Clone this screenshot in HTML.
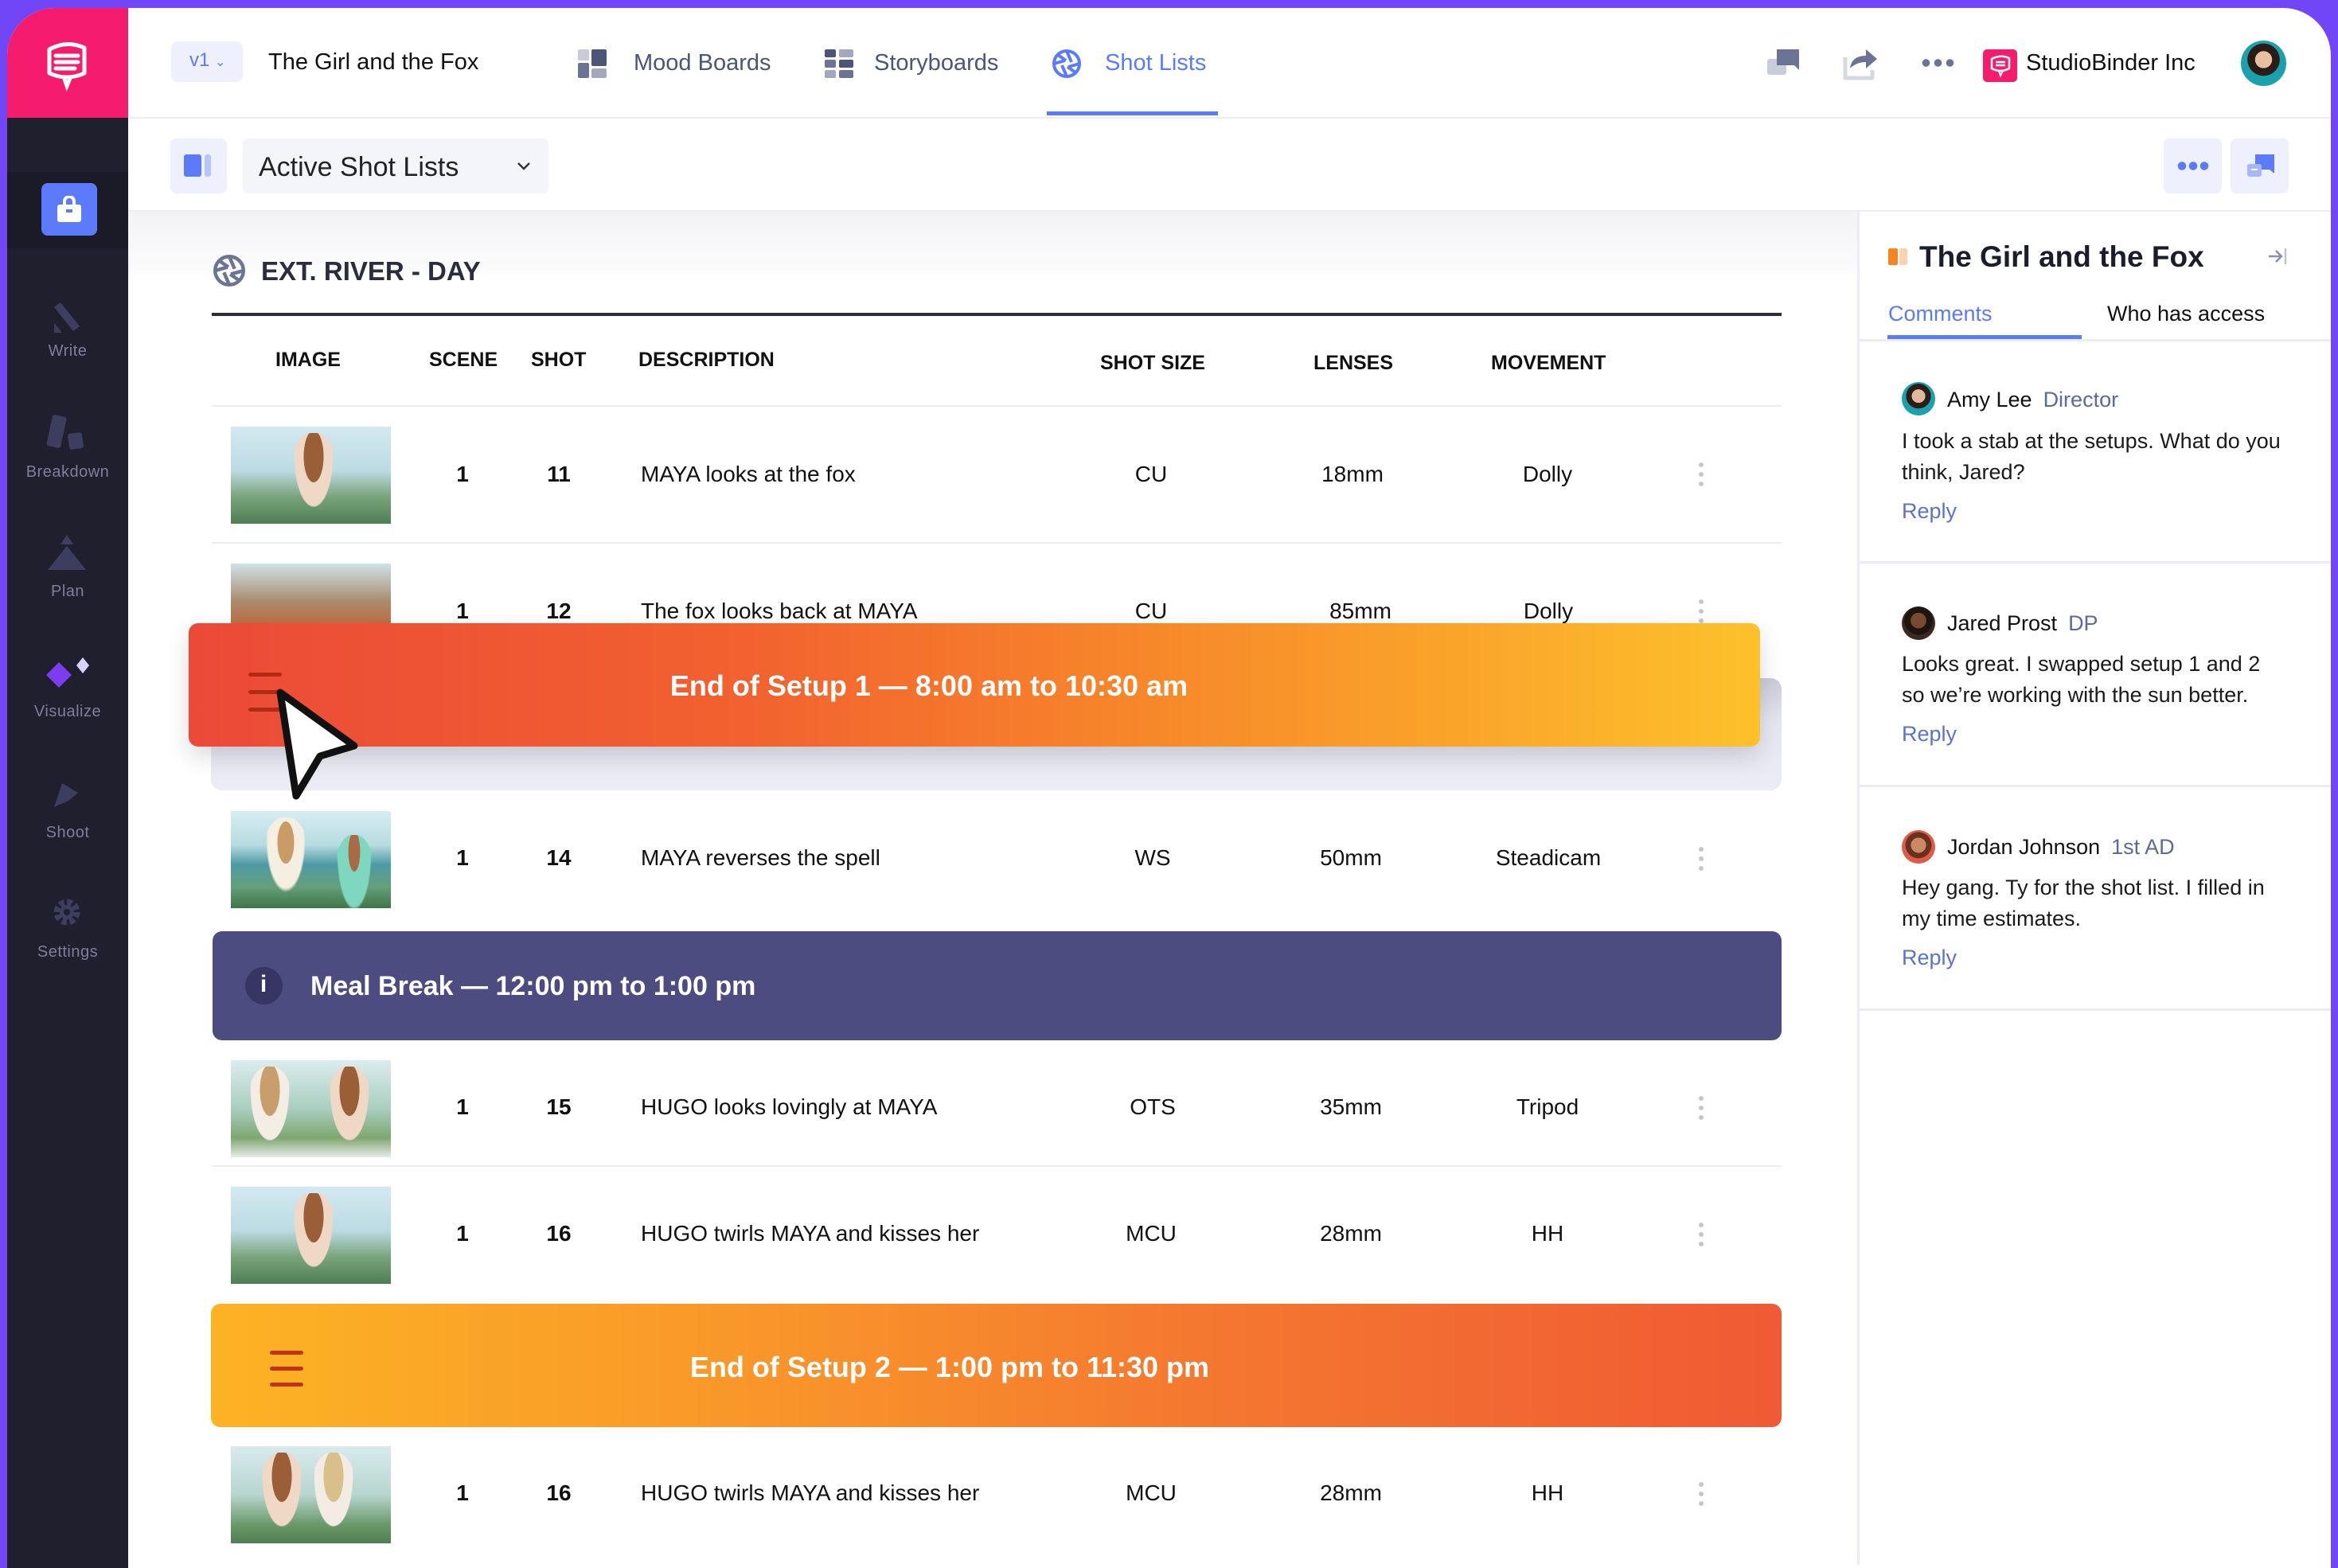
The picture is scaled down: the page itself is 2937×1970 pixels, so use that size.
<!DOCTYPE html>
<html><head><meta charset="utf-8"><style>
*{margin:0;padding:0;box-sizing:border-box}
body{width:2937px;height:1962px;overflow:hidden;background:#7046f6;font-family:"Liberation Sans",sans-serif;position:relative}
.a{position:absolute}
.t{position:absolute;white-space:nowrap;line-height:1}
.hd{font-size:25px;font-weight:bold;color:#111}
.rt{font-size:28px;color:#111}
.b{font-weight:bold}
.c{transform:translateX(-50%)}
.img{position:absolute;left:290px;width:201px;height:122px;overflow:hidden;background:linear-gradient(180deg,#d3e9f1 0%,#bcdbe3 45%,#7aa57c 72%,#4f7e53 100%)}
.img i{position:absolute;left:75px;top:8px;width:58px;height:105px;border-radius:45% 45% 30% 30%;background:radial-gradient(ellipse at 50% 28%,#9b5f38 0 30%,#efd8c6 31% 58%,transparent 60%)}
.keb{position:absolute;left:2134px;width:6px;height:36px;background:radial-gradient(circle,#c4c4cc 2.6px,transparent 3.2px) 0 0/6px 12px}
.sep{position:absolute;left:266px;width:1972px;height:2px;background:#ececf1}
.sl{position:absolute;left:9px;width:152px;text-align:center;font-size:20px;color:#7c7f9e;letter-spacing:.5px}
.cm{position:absolute;left:2389px;font-size:27px;color:#1a1a1a;line-height:39px;white-space:nowrap}
.nm{position:absolute;left:2446px;font-size:27px;color:#111;white-space:nowrap}
.nm span{color:#5d6a9a;margin-left:14px}
.rep{position:absolute;left:2389px;color:#5a74c9;font-size:27px}
.av{position:absolute;left:2389px;width:42px;height:42px;border-radius:50%;background:radial-gradient(circle at 50% 42%,#e2b89a 0 26%,#2a1d18 27% 48%,#1aa1ac 49%)}
.cline{position:absolute;left:2334px;width:594px;height:3px;background:#ececf2}
</style></head><body>
<div class="a" style="left:9px;top:10px;width:2919px;height:1960px;background:#fff;border-radius:60px 60px 0 0;overflow:hidden">
  <div class="a" style="left:0;top:0;width:152px;height:138px;background:#f51c6d"></div>
  <div class="a" style="left:0;top:138px;width:152px;height:1840px;background:#1f1f2e"></div>
  <div class="a" style="left:0;top:206px;width:152px;height:96px;background:#1b1b28"></div>
  <div class="a" style="left:152px;top:255px;width:2173px;height:80px;background:linear-gradient(#f3f3f5,#fcfcfd)"></div>
</div>
<!-- logo -->
<svg class="a" style="left:56px;top:50px" width="56" height="70" viewBox="0 0 56 70"><path d="M6 12 Q28 0 50 10 L50 42 Q28 52 6 42 Z" fill="none" stroke="#fff" stroke-width="5" stroke-linejoin="round"/><path d="M14 20h28M14 28h28M14 36h24" stroke="#fff" stroke-width="5" stroke-linecap="round"/><path d="M24 46 L28 58 L33 46" fill="none" stroke="#fff" stroke-width="5"/></svg>
<!-- sidebar -->
<div class="a" style="left:52px;top:230px;width:70px;height:66px;border-radius:8px;background:#5b7bfb"></div>
<svg class="a" style="left:71px;top:246px" width="32" height="34"><rect x="1" y="11" width="30" height="22" rx="3" fill="#fff"/><path d="M10 11 V7 a6 6 0 0 1 12 0 V11" stroke="#fff" stroke-width="4" fill="none"/><rect x="12" y="17" width="8" height="4" fill="#5b7bfb"/></svg>
<svg class="a" style="left:64px;top:378px" width="40" height="44"><path d="M4 8 L12 2 L36 32 L28 38Z" fill="#3d3e5f"/><path d="M4 40 L4 28 L14 40Z" fill="#3d3e5f"/></svg>
<div class="sl" style="top:430px">Write</div>
<svg class="a" style="left:56px;top:520px" width="56" height="50"><rect x="6" y="2" width="18" height="40" rx="3" fill="#3d3e5f" transform="rotate(12 15 22)"/><rect x="30" y="24" width="18" height="20" rx="3" fill="#3d3e5f" transform="rotate(-8 39 34)"/></svg>
<div class="sl" style="top:582px">Breakdown</div>
<svg class="a" style="left:58px;top:670px" width="52" height="50"><path d="M26 2 L34 14 H18Z" fill="#3d3e5f"/><path d="M26 16 L50 46 H2Z" fill="#3d3e5f"/></svg>
<div class="sl" style="top:732px">Plan</div>
<svg class="a" style="left:56px;top:822px" width="58" height="50"><path d="M2 26 L18 10 L34 26 L18 42Z" fill="#7c3df0"/><path d="M40 14 L48 4 L56 14 L48 24Z" fill="#d9d1fb"/></svg>
<div class="sl" style="top:883px">Visualize</div>
<svg class="a" style="left:64px;top:978px" width="40" height="40"><path d="M4 36 L14 6 L34 18 L22 28Z" fill="#3d3e5f"/></svg>
<div class="sl" style="top:1035px">Shoot</div>
<svg class="a" style="left:64px;top:1126px" width="40" height="40" viewBox="0 0 40 40"><circle cx="20" cy="20" r="12" fill="none" stroke="#3d3e5f" stroke-width="9" stroke-dasharray="6 3.4"/><circle cx="20" cy="20" r="9" fill="#3d3e5f"/><circle cx="20" cy="20" r="4" fill="#1f1f2e"/></svg>
<div class="sl" style="top:1185px">Settings</div>

<!-- header -->
<div class="a" style="left:161px;top:147px;width:2767px;height:2px;background:#ececf2"></div>
<div class="a" style="left:215px;top:52px;width:90px;height:51px;border-radius:8px;background:#eef0fd"></div>
<div class="t" style="left:238px;top:64px;font-size:24px;color:#5b7bfb">v1 <span style="font-size:16px">⌄</span></div>
<div class="t" style="left:337px;top:64px;font-size:29px;color:#111">The Girl and the Fox</div>
<svg class="a" style="left:726px;top:62px" width="36" height="36"><rect x="0" y="0" width="14" height="14" rx="2" fill="#c9cbd8"/><rect x="17" y="0" width="19" height="21" rx="2" fill="#4b5578"/><rect x="0" y="17" width="14" height="19" rx="2" fill="#6c7496"/><rect x="17" y="24" width="19" height="12" rx="2" fill="#a3a8bf"/></svg>
<div class="t" style="left:796px;top:65px;font-size:29px;color:#4b5578">Mood Boards</div>
<svg class="a" style="left:1036px;top:62px" width="36" height="36"><rect x="0" y="0" width="14" height="10" rx="2" fill="#4b5578"/><rect x="18" y="0" width="18" height="10" rx="2" fill="#a3a8bf"/><rect x="0" y="13" width="14" height="10" rx="2" fill="#6c7496"/><rect x="18" y="13" width="18" height="10" rx="2" fill="#4b5578"/><rect x="0" y="26" width="14" height="10" rx="2" fill="#a3a8bf"/><rect x="18" y="26" width="18" height="10" rx="2" fill="#6c7496"/></svg>
<div class="t" style="left:1098px;top:65px;font-size:29px;color:#4b5578">Storyboards</div>
<svg class="a" style="left:1322px;top:62px" width="36" height="36" viewBox="0 0 36 36"><circle cx="18" cy="18" r="16" fill="none" stroke="#5b7bfb" stroke-width="4"/><path d="M18 2 L24 16 M34 18 L20 22 M18 34 L12 20 M2 18 L16 14 M7 7 L17 14 M29 29 L19 22" stroke="#5b7bfb" stroke-width="4"/></svg>
<div class="t" style="left:1388px;top:65px;font-size:29px;color:#5b7bfb">Shot Lists</div>
<div class="a" style="left:1315px;top:140px;width:215px;height:5px;background:#5b7bfb"></div>
<svg class="a" style="left:2218px;top:58px" width="46" height="42"><rect x="2" y="16" width="24" height="20" rx="3" fill="#c9ccd9"/><path d="M14 4 H42 V30 L36 24 H14Z" fill="#6c7496"/></svg>
<svg class="a" style="left:2314px;top:54px" width="46" height="48"><path d="M4 18 V44 H38 V34" fill="none" stroke="#d6d8e2" stroke-width="5" stroke-linejoin="round"/><path d="M10 32 Q12 16 30 16 V8 L44 20 L30 32 V24 Q18 24 10 32Z" fill="#6c7496"/></svg>
<div class="a" style="left:2412px;top:74px;width:44px;height:10px;background:radial-gradient(circle,#6c7496 4.5px,transparent 5px) 0 0/15px 10px"></div>
<div class="a" style="left:2491px;top:62px;width:43px;height:41px;border-radius:5px;background:#f51c6d"></div>
<svg class="a" style="left:2499px;top:68px" width="28" height="30"><path d="M3 6 Q14 0 25 5 V18 Q14 24 3 18Z" fill="none" stroke="#fff" stroke-width="2.5"/><path d="M8 10h12M8 14h12" stroke="#fff" stroke-width="2.5"/><path d="M12 21 L14 27 L17 21" fill="none" stroke="#fff" stroke-width="2"/></svg>
<div class="t" style="left:2545px;top:65px;font-size:29px;color:#111">StudioBinder Inc</div>
<div class="a" style="left:2815px;top:51px;width:57px;height:57px;border-radius:50%;background:radial-gradient(circle at 50% 42%,#e8c0a0 0 24%,#2a1d18 25% 46%,#1aa1ac 47%)"></div>

<!-- toolbar -->
<div class="a" style="left:161px;top:264px;width:2767px;height:2px;background:#ececf2"></div>
<div class="a" style="left:214px;top:174px;width:71px;height:69px;border-radius:7px;background:#eef0fd"></div>
<div class="a" style="left:231px;top:194px;width:22px;height:28px;border-radius:3px;background:#5b7bfb"></div>
<div class="a" style="left:257px;top:194px;width:8px;height:28px;border-radius:3px;background:#b7c4fd"></div>
<div class="a" style="left:305px;top:174px;width:384px;height:69px;border-radius:7px;background:#f4f5fa"></div>
<div class="t" style="left:325px;top:193px;font-size:34px;color:#222">Active Shot Lists</div>
<svg class="a" style="left:648px;top:202px" width="20" height="14"><path d="M3 3 L10 10 L17 3" fill="none" stroke="#333" stroke-width="2.5"/></svg>
<div class="a" style="left:2718px;top:174px;width:73px;height:69px;border-radius:7px;background:#eef0fd"></div>
<div class="a" style="left:2734px;top:203px;width:42px;height:11px;background:radial-gradient(circle,#5b7bfb 5px,transparent 5.5px) 0 0/14px 11px"></div>
<div class="a" style="left:2802px;top:174px;width:73px;height:69px;border-radius:7px;background:#eef0fd"></div>
<svg class="a" style="left:2821px;top:192px" width="38" height="34"><path d="M12 2 H36 V26 L30 21 H12Z" fill="#5b7bfb"/><rect x="2" y="14" width="18" height="16" rx="3" fill="#a7b6fd"/><path d="M7 21h8" stroke="#fff" stroke-width="2"/></svg>

<!-- section header -->
<svg class="a" style="left:268px;top:320px" width="40" height="40" viewBox="0 0 36 36"><circle cx="18" cy="18" r="16" fill="none" stroke="#6c7496" stroke-width="4"/><path d="M18 2 L24 16 M34 18 L20 22 M18 34 L12 20 M2 18 L16 14 M7 7 L17 14 M29 29 L19 22" stroke="#6c7496" stroke-width="4"/></svg>
<div class="t b" style="left:328px;top:324px;font-size:33px;color:#2a2d3e">EXT. RIVER - DAY</div>
<div class="a" style="left:266px;top:393px;width:1972px;height:4px;background:#2a2d3e"></div>
<div class="t hd" style="left:346px;top:440px">IMAGE</div>
<div class="t hd" style="left:539px;top:440px">SCENE</div>
<div class="t hd" style="left:667px;top:440px">SHOT</div>
<div class="t hd" style="left:802px;top:440px">DESCRIPTION</div>
<div class="t hd" style="left:1382px;top:444px">SHOT SIZE</div>
<div class="t hd" style="left:1650px;top:444px">LENSES</div>
<div class="t hd" style="left:1873px;top:444px">MOVEMENT</div>
<div class="sep" style="top:509px"></div>

<!-- row 11 -->
<div class="img" style="top:536px"><i></i></div>
<div class="t rt b c" style="left:581px;top:582px">1</div>
<div class="t rt b c" style="left:702px;top:582px">11</div>
<div class="t rt" style="left:805px;top:582px">MAYA looks at the fox</div>
<div class="t rt c" style="left:1446px;top:582px">CU</div>
<div class="t rt c" style="left:1699px;top:582px">18mm</div>
<div class="t rt c" style="left:1944px;top:582px">Dolly</div>
<div class="keb" style="top:578px"></div>
<div class="sep" style="top:681px"></div>

<!-- row 12 -->
<div class="img" style="top:708px;height:80px;background:linear-gradient(180deg,#cfe3e6,#a98a6c 60%,#c16b3b)"></div>
<div class="t rt b c" style="left:581px;top:754px">1</div>
<div class="t rt b c" style="left:702px;top:754px">12</div>
<div class="t rt" style="left:805px;top:754px">The fox looks back at MAYA</div>
<div class="t rt c" style="left:1446px;top:754px">CU</div>
<div class="t rt c" style="left:1709px;top:754px">85mm</div>
<div class="t rt c" style="left:1945px;top:754px">Dolly</div>
<div class="keb" style="top:750px"></div>

<!-- lifted grey row -->
<div class="a" style="left:265px;top:852px;width:1973px;height:141px;border-radius:14px;background:linear-gradient(#c9cbd8,#e6e7f1 40%,#ebecf4)"></div>
<!-- banner 1 -->
<div class="a" style="left:237px;top:783px;width:1974px;height:155px;border-radius:12px;background:linear-gradient(90deg,#eb4a38 0%,#f2612f 35%,#f7862a 60%,#fdc12b 100%);box-shadow:0 12px 30px rgba(0,0,0,.15)"></div>
<div class="a" style="left:312px;top:845px;width:42px;height:5px;border-radius:3px;background:#b32a12;box-shadow:0 22px 0 #b32a12,0 44px 0 #b32a12"></div>
<div class="t b c" style="left:1167px;top:844px;font-size:36px;color:#fff">End of Setup 1 — 8:00 am to 10:30 am</div>
<svg class="a" style="left:340px;top:862px" width="120" height="145" viewBox="0 0 120 145"><path d="M12 8 L105 75 L62 88 L32 138 Z" fill="#fff" stroke="#111" stroke-width="9" stroke-linejoin="round"/></svg>

<!-- row 14 -->
<div class="img" style="top:1019px;background:linear-gradient(180deg,#d6eef3 0%,#b6dbe0 35%,#4e9aa6 55%,#65a07a 78%,#3f7547 100%)"><i style="left:40px;background:radial-gradient(ellipse at 50% 30%,#c99b66 0 25%,#f4efe0 26% 55%,transparent 60%)"></i><i style="left:130px;top:30px;width:50px;background:radial-gradient(ellipse at 50% 20%,#a86b45 0 20%,#7fd7c0 22% 58%,transparent 62%)"></i></div>
<div class="t rt b c" style="left:581px;top:1064px">1</div>
<div class="t rt b c" style="left:702px;top:1064px">14</div>
<div class="t rt" style="left:805px;top:1064px">MAYA reverses the spell</div>
<div class="t rt c" style="left:1448px;top:1064px">WS</div>
<div class="t rt c" style="left:1697px;top:1064px">50mm</div>
<div class="t rt c" style="left:1945px;top:1064px">Steadicam</div>
<div class="keb" style="top:1061px"></div>

<!-- meal break -->
<div class="a" style="left:267px;top:1170px;width:1971px;height:137px;border-radius:12px;background:#4d4c80"></div>
<div class="a" style="left:308px;top:1215px;width:47px;height:47px;border-radius:50%;background:#363563"></div>
<div class="t b c" style="left:331px;top:1222px;font-size:30px;color:#fff">i</div>
<div class="t b" style="left:390px;top:1222px;font-size:34px;color:#fff">Meal Break — 12:00 pm to 1:00 pm</div>

<!-- row 15 -->
<div class="img" style="top:1332px;background:linear-gradient(180deg,#dcecee,#a9cfc0 50%,#7ea66f 80%,#e8ece8)"><i style="left:20px;background:radial-gradient(ellipse at 50% 28%,#c79e6c 0 30%,#f3ede4 31% 58%,transparent 60%)"></i><i style="left:120px"></i></div>
<div class="t rt b c" style="left:581px;top:1377px">1</div>
<div class="t rt b c" style="left:702px;top:1377px">15</div>
<div class="t rt" style="left:805px;top:1377px">HUGO looks lovingly at MAYA</div>
<div class="t rt c" style="left:1448px;top:1377px">OTS</div>
<div class="t rt c" style="left:1697px;top:1377px">35mm</div>
<div class="t rt c" style="left:1944px;top:1377px">Tripod</div>
<div class="keb" style="top:1374px"></div>
<div class="sep" style="top:1464px"></div>

<!-- row 16 -->
<div class="img" style="top:1491px"><i></i></div>
<div class="t rt b c" style="left:581px;top:1536px">1</div>
<div class="t rt b c" style="left:702px;top:1536px">16</div>
<div class="t rt" style="left:805px;top:1536px">HUGO twirls MAYA and kisses her</div>
<div class="t rt c" style="left:1446px;top:1536px">MCU</div>
<div class="t rt c" style="left:1697px;top:1536px">28mm</div>
<div class="t rt c" style="left:1944px;top:1536px">HH</div>
<div class="keb" style="top:1533px"></div>

<!-- banner 2 -->
<div class="a" style="left:265px;top:1638px;width:1973px;height:155px;border-radius:12px;background:linear-gradient(90deg,#fcb324 0%,#f9962a 35%,#f47630 65%,#f05a34 100%)"></div>
<div class="a" style="left:339px;top:1697px;width:42px;height:5px;border-radius:3px;background:#c0321a;box-shadow:0 20px 0 #c0321a,0 40px 0 #c0321a"></div>
<div class="t b c" style="left:1193px;top:1700px;font-size:36px;color:#fff">End of Setup 2 — 1:00 pm to 11:30 pm</div>

<!-- last row -->
<div class="img" style="top:1817px;background:linear-gradient(180deg,#d8ebee,#b7d6cf 50%,#6c9a6a 80%,#4f7e53)"><i style="left:35px"></i><i style="left:100px;background:radial-gradient(ellipse at 50% 28%,#d9c08a 0 30%,#f2ece4 31% 58%,transparent 60%)"></i></div>
<div class="t rt b c" style="left:581px;top:1862px">1</div>
<div class="t rt b c" style="left:702px;top:1862px">16</div>
<div class="t rt" style="left:805px;top:1862px">HUGO twirls MAYA and kisses her</div>
<div class="t rt c" style="left:1446px;top:1862px">MCU</div>
<div class="t rt c" style="left:1697px;top:1862px">28mm</div>
<div class="t rt c" style="left:1944px;top:1862px">HH</div>
<div class="keb" style="top:1859px"></div>

<!-- right panel -->
<div class="a" style="left:2333px;top:266px;width:3px;height:1700px;background:#ececf2"></div>
<div class="a" style="left:2372px;top:312px;width:12px;height:21px;background:#f7851f;border-radius:2px"></div>
<div class="a" style="left:2386px;top:312px;width:10px;height:21px;background:#fcd2b0;border-radius:2px"></div>
<div class="t b" style="left:2411px;top:304px;font-size:37px;color:#1b1d2b">The Girl and the Fox</div>
<svg class="a" style="left:2848px;top:308px" width="26" height="28"><path d="M2 14 H18 M11 7 L18 14 L11 21" fill="none" stroke="#8a8fb0" stroke-width="2.5"/><path d="M23 4 V24" stroke="#c0c3d4" stroke-width="2.5"/></svg>
<div class="t" style="left:2372px;top:381px;font-size:27px;color:#5b7bfb">Comments</div>
<div class="t" style="left:2647px;top:381px;font-size:27px;color:#111">Who has access</div>
<div class="cline" style="top:426px"></div>
<div class="a" style="left:2371px;top:421px;width:244px;height:5px;background:#5b7bfb"></div>

<div class="av" style="top:480px"></div>
<div class="nm" style="top:487px">Amy Lee<span>Director</span></div>
<div class="cm" style="top:535px">I took a stab at the setups. What do you<br>think, Jared?</div>
<div class="rep" style="top:627px">Reply</div>
<div class="cline" style="top:705px"></div>

<div class="av" style="top:762px;background:radial-gradient(circle at 50% 42%,#7a4a30 0 30%,#1e1410 31% 55%,#3a2a22 56%)"></div>
<div class="nm" style="top:768px">Jared Prost<span>DP</span></div>
<div class="cm" style="top:815px">Looks great. I swapped setup 1 and 2<br>so we’re working with the sun better.</div>
<div class="rep" style="top:907px">Reply</div>
<div class="cline" style="top:986px"></div>

<div class="av" style="top:1043px;background:radial-gradient(circle at 50% 45%,#c98a64 0 30%,#6a3120 31% 52%,#e05a48 53%)"></div>
<div class="nm" style="top:1049px">Jordan Johnson<span>1st AD</span></div>
<div class="cm" style="top:1096px">Hey gang. Ty for the shot list. I filled in<br>my time estimates.</div>
<div class="rep" style="top:1188px">Reply</div>
<div class="cline" style="top:1267px"></div>
</body></html>
